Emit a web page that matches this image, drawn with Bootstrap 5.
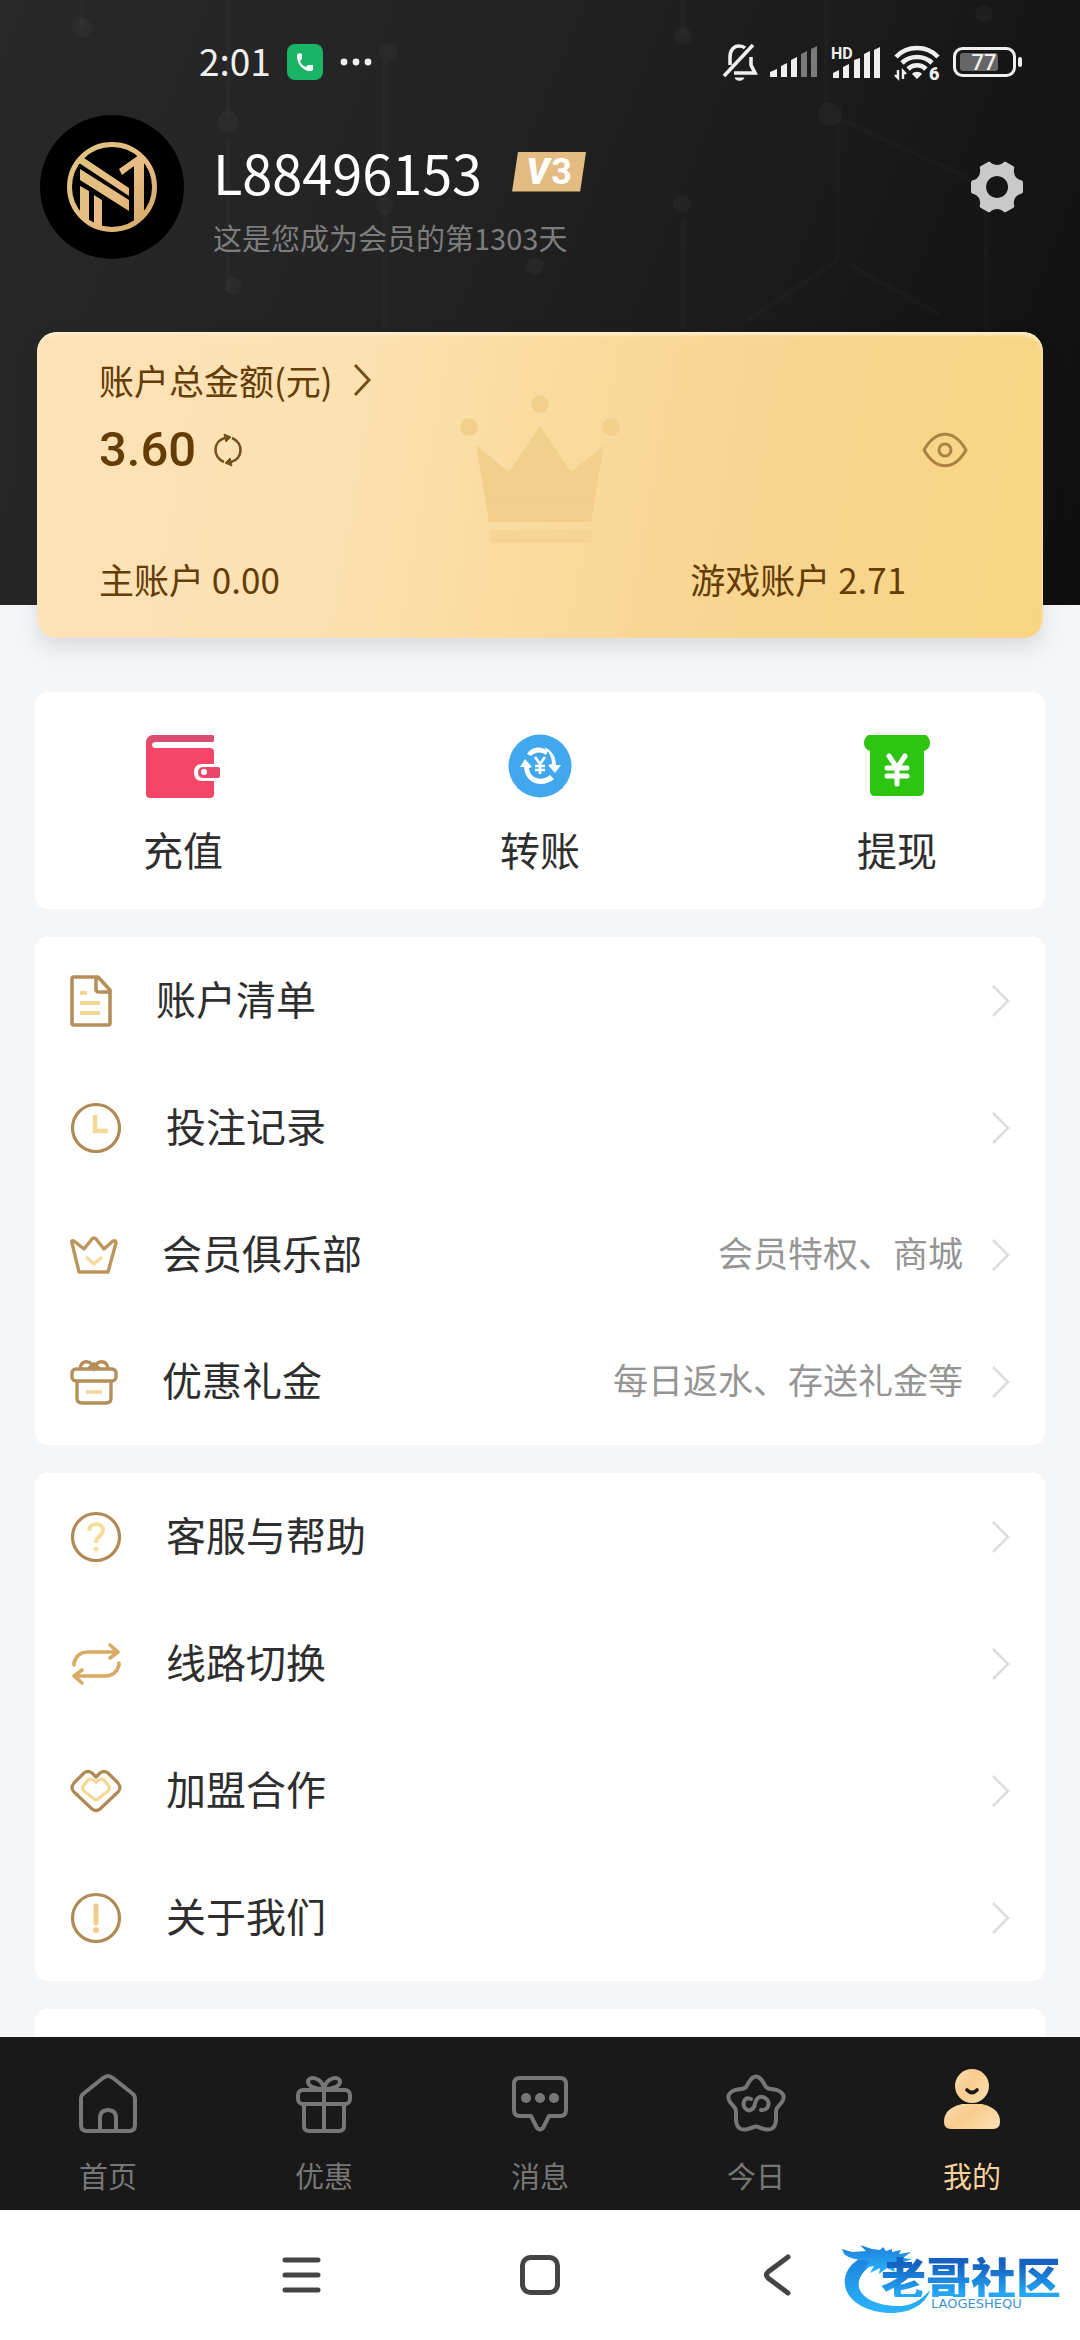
<!DOCTYPE html>
<html lang="zh-CN">
<head>
<meta charset="utf-8">
<meta name="viewport" content="width=device-width, initial-scale=1">
<title>我的</title>
<link href="https://cdn.jsdelivr.net/npm/bootstrap@5.3.0/dist/css/bootstrap.min.css" rel="stylesheet">
<style>
  body { font-family: "Noto Sans CJK SC", "Noto Sans", sans-serif; background: #f5f6f8; color: #2e2e2e; }
  a { color: inherit; text-decoration: none; }
  svg { display: block; flex: none; overflow: visible; }
  .plain-btn { background: none; border: 0; padding: 0; color: inherit; }

  .hero { background: linear-gradient(112deg, #282828 0%, #242424 32%, #1c1c1c 62%, #0e0e0e 100%); padding-bottom: 346px; }
  .hero-net { inset: 0; }
  .status { height: 115px; padding: 24px 58px 15px 199px; color: #efefef; }
  .clock { font-size: 37px; line-height: 44px; padding-bottom: 4px; }
  .status-icons { gap: 13px; }

  .profile { height: 144px; padding: 0 57px 0 40px; }
  .user-name { font-size: 54px; line-height: 60px; font-weight: 400; }
  .user-days { font-size: 29px; line-height: 44px; color: #7d7d7d; margin-top: 13px; }
  .who { margin-left: 29px; padding-top: 26px; }
  .level { width: 74px; height: 40px; margin-left: 30px; gap: 2px; color: #fff; background: #e4bb82; clip-path: polygon(8% 0, 100% 0, 92% 100%, 0 100%); line-height: 40px; font-family: Roboto, sans-serif; font-weight: 700; font-size: 36px; }
  .level em { font-weight: 900; }

  .wallet { margin: -273px 37px 0; padding: 24px 57px 35px 62px; border-radius: 20px; color: #643c05;
    background: linear-gradient(100deg, #fde2b8 0%, #fce1b2 30%, #fadca0 48%, #f8d590 70%, #f9d583 100%);
    box-shadow: 0 10px 20px rgba(40, 50, 80, .13), inset 0 3px 3px #feeecb; }
  .wallet-crown { left: 50%; top: 62px; transform: translateX(-50%); }
  .wallet-line { font-size: 35px; line-height: 48px; }
  .wallet-more { margin-left: 20px; }
  .total { font-family: Roboto, sans-serif; font-size: 49px; line-height: 60px; font-weight: 500; }
  .total-row { margin: 16px 0 75px; gap: 18px; }
  .eye-btn { margin-right: 18px; }

  .panel { margin: 28px 35px 0; background: #fff; border-radius: 12px; overflow: hidden; }
  .actions { margin-top: 54px; padding: 42px 108px 26px; height: 217px; }
  .action-text { font-size: 40px; line-height: 56px; }
  .action { gap: 23px; }

  .line-item { height: 127px; padding: 0 35px; gap: 44px; font-size: 40px; line-height: 56px; }
  .line-item .label, .hint-text { padding-bottom: 5px; }
  .hint { font-size: 35px; color: #959595; gap: 29px; }

  .tabbar { background: #191919; color: #777; height: 173px; font-size: 29px; line-height: 42px; }
  .tabbar a { padding-top: 32px; gap: 19px; }
  .tabbar .on { color: #fbd29a; }
  .sysbar { height: 130px; background: #fff; }
  .sysbar-keys { padding: 0 281px; }
  .forum { right: 16px; top: 33px; width: 224px; height: 72px; padding: 14px 0 0 41px; }
  .forum svg { left: 0; top: 0; }
  .forum-cn { font-weight: 900; font-size: 45px; line-height: 40px; background: linear-gradient(#1562c0 20%, #24a6f5 90%); -webkit-background-clip: text; background-clip: text; color: transparent; }
  .forum-en { font-family: "DejaVu Sans", sans-serif; font-size: 13px; line-height: 14px; padding-left: 50px; color: #3c94d8; }
</style>
<script src="https://cdn.jsdelivr.net/npm/bootstrap@5.3.0/dist/js/bootstrap.bundle.min.js"></script>
</head>
<body>
<div class="d-flex flex-column vh-100 overflow-hidden">
  <main class="flex-fill overflow-hidden">
    <header class="hero position-relative">
      <svg class="hero-net position-absolute w-100 h-100" viewBox="0 0 1080 605" preserveAspectRatio="none" fill="none" stroke="#fff" stroke-opacity=".018" stroke-width="5" aria-hidden="true">
        <path d="M82 0v30M228 0v115M228 140v150M385 60v140M385 210v120M683 0v35M683 220v110M838 120v140M986 210v120M826 0v105M838 118l130 60M838 260l-90 60M850 265l90 50"/>
        <g fill="#fff" fill-opacity=".03" stroke="none"><circle cx="82" cy="28" r="10"/><circle cx="228" cy="122" r="11"/><circle cx="385" cy="206" r="9"/><circle cx="388" cy="52" r="9"/><circle cx="683" cy="36" r="9"/><circle cx="682" cy="204" r="9"/><circle cx="830" cy="114" r="12"/><circle cx="984" cy="14" r="9"/><circle cx="233" cy="286" r="9"/><circle cx="535" cy="266" r="9"/></g>
      </svg>
      <div class="status position-relative d-flex align-items-center justify-content-between">
        <div class="d-flex align-items-center">
          <span class="clock">2:01</span>
          <svg class="ms-3 me-3" width="36" height="36" viewBox="0 0 36 36"><rect width="36" height="36" rx="8" fill="#18b566"/><path d="M10 11c1-2 3-2 5-1v5l-2 2c1 3 3 5 6 6l2-2h5v5c-1 1-3 1-4 1-7-1-12-7-12-16z" fill="#fff"/></svg>
          <svg width="34" height="10" viewBox="0 0 34 10" fill="#efefef"><circle cx="5" cy="5" r="3.4"/><circle cx="17" cy="5" r="3.4"/><circle cx="29" cy="5" r="3.4"/></svg>
        </div>
        <div class="status-icons d-flex align-items-center">
          <svg width="35" height="38" viewBox="0 0 35 38" fill="none" stroke="#efefef" stroke-width="3.6"><path d="M8 22V14C8 7 12 3 17 3c3 0 5 1 6 2M29 14v8l4 8H12M31 2L2 33"/><path d="M13 35h9c-1 3-8 3-9 0z" fill="#efefef" stroke-width="1"/></svg>
          <svg width="48" height="32" viewBox="0 0 48 32" fill="#efefef"><path d="M0 31v-5l7-3v8zM11 31V20l6-3v14zM21 31V14l6-3v20z"/><path d="M31 31V8l6-3v26zM41 31V3l6-3v31z" opacity=".45"/></svg>
          <svg width="50" height="34" viewBox="0 0 50 34" fill="#efefef"><path d="M2 33v-5l6-3v8zM12 33V22l6-3v14zM23 33V15l6-2v20zM33 33V9l6-3v27zM43 33V5l6-3v31z"/><text x="0" y="14" font-family="Roboto, sans-serif" font-weight="700" font-size="16">HD</text></svg>
          <svg width="46" height="38" viewBox="0 0 46 38" fill="none" stroke="#efefef" stroke-width="4.6"><path d="M2 14C13 2 33 2 44 14M8 20c8-8 22-8 30 0M14 26c5-5 13-5 18 0"/><path d="M18 31c2-3 8-3 10 0l-5 5z" fill="#efefef" stroke="none"/><path d="M4 27v8l-3-3M9 36v-8l3 3" stroke-width="2.4"/><text x="35" y="37" font-family="Roboto, sans-serif" font-weight="900" font-size="18" fill="#efefef" stroke="none">6</text></svg>
          <svg width="69" height="30" viewBox="0 0 69 30"><rect x="1.5" y="1.5" width="60" height="27" rx="8" fill="none" stroke="#efefef" stroke-width="3"/><rect x="7" y="6" width="38" height="18" rx="3" fill="#666"/><rect x="65" y="10" width="4" height="10" rx="2" fill="#efefef"/><text x="31" y="23" text-anchor="middle" font-family="Roboto, sans-serif" font-size="22" font-weight="500" fill="#efefef">77</text></svg>
        </div>
      </div>
      <div class="profile position-relative d-flex align-items-center">
        <svg width="144" height="144" viewBox="0 0 144 144">
          <defs><linearGradient id="gold" x1="0" y1="0" x2="1" y2="1"><stop offset="0" stop-color="#dfc57e"/><stop offset=".55" stop-color="#e8bc84"/><stop offset="1" stop-color="#d2a763"/></linearGradient><clipPath id="ring"><circle cx="72" cy="72" r="42"/></clipPath></defs>
          <circle cx="72" cy="72" r="72"/>
          <circle cx="72" cy="72" r="42.5" fill="none" stroke="url(#gold)" stroke-width="5"/>
          <g clip-path="url(#ring)" fill="url(#gold)"><path d="M38 39l51 34v8L36 46zM40 54l49 31v11L40 65zM40 71l9 5v42h-9zM54 80l8 5v34h-8zM79 54l20-14h5v66l-10 7V51l-12 9z"/></g>
        </svg>
        <div class="who flex-fill">
          <div class="d-flex align-items-center text-white">
            <h1 class="user-name mb-0">L88496153</h1>
            <span class="level d-flex align-items-center justify-content-center"><em>V</em><span>3</span></span>
          </div>
          <div class="user-days">这是您成为会员的第1303天</div>
        </div>
        <button class="plain-btn" type="button" aria-label="设置"><svg width="52" height="52" viewBox="0 0 52 52"><path fill="#c9c9c9" fill-rule="evenodd" d="M17 1q2-1 3 1 6 4 12 0 1-2 3-1l7 4q2 1 1 3-1 8 6 11 3 0 3 3v8q0 3-3 3-7 3-6 11 1 2-1 3l-7 4q-2 1-3-1-6-4-12 0-1 2-3 1l-7-4q-2-1-1-3 1-8-6-11-3 0-3-3v-8q0-3 3-3 7-3 6-11-1-2 1-3zM26 15a11 11 0 1 0 .1 0z"/></svg></button>
      </div>
    </header>

    <section class="wallet position-relative">
      <svg class="wallet-crown position-absolute" width="160" height="150" viewBox="0 0 160 150"><defs><linearGradient id="crown" x1="0" y1="0" x2="0" y2="1"><stop offset="0" stop-color="#efd28c"/><stop offset="1" stop-color="#f4cd8b"/></linearGradient></defs><g fill="url(#crown)"><circle cx="9" cy="33" r="9"/><circle cx="80" cy="10" r="9"/><circle cx="151" cy="33" r="9"/><path d="M16 51l33 27 31-46 31 46 33-27-13 77H29z"/><path d="M29 136h104l-2 13H30z" opacity=".55"/></g></svg>
      <a href="#" class="wallet-line position-relative d-inline-flex align-items-center">账户总金额(元)
        <svg class="wallet-more" width="18" height="32" viewBox="0 0 18 32" fill="none" stroke="#74501d" stroke-width="3"><path d="M2 1l14 15L2 31"/></svg></a>
      <div class="total-row position-relative d-flex align-items-center">
        <span class="total">3.60</span>
        <button class="plain-btn" type="button" aria-label="刷新"><svg width="28" height="32" viewBox="0 0 28 32" fill="none" stroke="#74501d" stroke-width="2.6"><path d="M10 28C-2 23-1 7 11 4M18 4c12 5 11 21-1 24"/><path d="M10 0l7 3-5 5zM18 32l-7-3 5-5z" fill="#74501d" stroke-width="1"/></svg></button>
        <button class="plain-btn eye-btn ms-auto" type="button" aria-label="显示金额"><svg width="46" height="36" viewBox="0 0 46 36" fill="none" stroke="#ac8142" stroke-width="3"><path d="M2 18C14-3 32-3 44 18 32 39 14 39 2 18z" stroke-linejoin="round"/><circle cx="23" cy="18" r="6"/></svg></button>
      </div>
      <div class="row g-0 wallet-line position-relative">
        <div class="col-8">主账户 0.00</div>
        <div class="col-4">游戏账户 2.71</div>
      </div>
    </section>

    <nav class="panel actions d-flex justify-content-between" aria-label="资金">
      <a href="#" class="action d-flex flex-column align-items-center">
        <svg width="74" height="64" viewBox="0 0 74 64"><path d="M8 1h58q2 0 2 2v3q0 2-2 2H10q-4 0-4 3t4 3h54q4 0 4 4v12H56q-8 0-8 8.500T56 47h12v13q0 4-4 4H4q-4 0-4-4V9q0-8 8-8z" fill="#f64668"/><path d="M8 1h58q2 0 2 2v3q0 2-2 2H10Q3 8 1 11 1 1 8 1z" fill="#d94d70"/><path d="M58 33h14q2 0 2 2v7q0 2-2 2H58q-6 0-6-5.500t6-5.500z" fill="#e5486b"/><circle cx="58" cy="38" r="3" fill="#fff"/></svg>
        <span class="action-text">充值</span></a>
      <a href="#" class="action d-flex flex-column align-items-center">
        <svg width="64" height="64" viewBox="0 0 64 64"><circle cx="32" cy="32" r="31.500" fill="#41a8ee"/><g fill="#fff"><path d="M19 20C24 12 34 12 40 17L38 21C33 17 27 18 23 22zM36 13C44 16 48 23 48 31L53 31 47 39 40 31 44 30C44 23 41 18 36 13z"/><path d="M12 33L17 25 24 33 21 34C22 45 34 48 42 41L46 45C35 55 17 50 16 33z"/></g><path d="M27 23l5 7 5-7M32 30v10M27 32h10M27 36h10" fill="none" stroke="#fff" stroke-width="2.600"/></svg>
        <span class="action-text">转账</span></a>
      <a href="#" class="action d-flex flex-column align-items-center">
        <svg width="66" height="64" viewBox="0 0 66 64"><path d="M4 1h58q4 3 4 8 0 6-6 8v40q0 5-5 5H11q-5 0-5-5V17Q0 15 0 9q0-5 4-8z" fill="#2ec512"/><path d="M25 22l8 12 8-12M33 34v16M23 34h20M23 42h20" fill="none" stroke="#fff" stroke-width="5" stroke-linecap="round"/></svg>
        <span class="action-text">提现</span></a>
    </nav>

    <nav class="panel" aria-label="账户">
      <a href="#" class="line-item d-flex align-items-center">
        <svg width="42" height="52" viewBox="0 0 42 52" fill="none" stroke="#b58f59" stroke-width="3.600" stroke-linejoin="round"><path d="M4 2h24l12 13v33q0 2-2 2H4q-2 0-2-2V4q0-2 2-2zM26 2v12q0 3 3 3h11"/><path d="M10 18h7M10 28h20M10 38h20" stroke="#f3d594" stroke-width="4"/></svg>
        <span class="label flex-fill">账户清单</span>
        <svg width="18" height="32" viewBox="0 0 18 32" fill="none" stroke="#ddd" stroke-width="2.500"><path d="M1 1l15 15L1 31"/></svg></a>
      <a href="#" class="line-item d-flex align-items-center">
        <svg width="52" height="52" viewBox="0 0 52 52" fill="none" stroke="#b08a55" stroke-width="3.200"><circle cx="26" cy="26" r="23.500"/><path d="M25 13v16h13" stroke="#f6d994" stroke-width="4.500"/></svg>
        <span class="label flex-fill">投注记录</span>
        <svg width="18" height="32" viewBox="0 0 18 32" fill="none" stroke="#ddd" stroke-width="2.500"><path d="M1 1l15 15L1 31"/></svg></a>
      <a href="#" class="line-item d-flex align-items-center">
        <svg width="48" height="38" viewBox="0 0 48 38" fill="none" stroke="#bc955a" stroke-width="3.400" stroke-linejoin="round"><path d="M9 36L2 7q-1-3 2-2l10 8 8-10q2-2 4 0l8 10 9-8q3-1 3 2l-8 29z"/><path d="M16 21l8 7 8-7" stroke="#f6dc9c"/></svg>
        <span class="label flex-fill">会员俱乐部</span>
        <span class="hint d-flex align-items-center"><span class="hint-text">会员特权、商城</span>
        <svg width="18" height="32" viewBox="0 0 18 32" fill="none" stroke="#ddd" stroke-width="2.500"><path d="M1 1l15 15L1 31"/></svg></span></a>
      <a href="#" class="line-item d-flex align-items-center">
        <svg width="48" height="46" viewBox="0 0 48 46" fill="none" stroke="#b58f59" stroke-width="3.400"><rect x="2" y="10" width="44" height="12" rx="4"/><path d="M7 22v17q0 5 5 5h24q5 0 5-5V22M10 10c1-9 10-10 14-1 4-9 13-8 14 1M18 10l6-5 6 5"/><path d="M16 33h16" stroke="#f3d594"/></svg>
        <span class="label flex-fill">优惠礼金</span>
        <span class="hint d-flex align-items-center"><span class="hint-text">每日返水、存送礼金等</span>
        <svg width="18" height="32" viewBox="0 0 18 32" fill="none" stroke="#ddd" stroke-width="2.500"><path d="M1 1l15 15L1 31"/></svg></span></a>
    </nav>

    <nav class="panel" aria-label="服务">
      <a href="#" class="line-item d-flex align-items-center">
        <svg width="52" height="52" viewBox="0 0 52 52" fill="none" stroke="#b08a55" stroke-width="3.200"><circle cx="26" cy="26" r="23.500"/><path d="M19 20c0-9 14-9 14-1 0 6-7 6-7 13" stroke="#f4dc9a" stroke-width="4"/><circle cx="26" cy="38" r="2.500" fill="#f4dc9a" stroke="none"/></svg>
        <span class="label flex-fill">客服与帮助</span>
        <svg width="18" height="32" viewBox="0 0 18 32" fill="none" stroke="#ddd" stroke-width="2.500"><path d="M1 1l15 15L1 31"/></svg></a>
      <a href="#" class="line-item d-flex align-items-center">
        <svg width="52" height="42" viewBox="0 0 52 42" fill="none" stroke="#d8aa66" stroke-width="3.600" stroke-linecap="round" stroke-linejoin="round"><path d="M4 22v-2q3-11 14-11h30M40 2l8 7-8 6M49 20v2q-3 11-14 11H4M12 40l-8-7 8-6"/></svg>
        <span class="label flex-fill">线路切换</span>
        <svg width="18" height="32" viewBox="0 0 18 32" fill="none" stroke="#ddd" stroke-width="2.500"><path d="M1 1l15 15L1 31"/></svg></a>
      <a href="#" class="line-item d-flex align-items-center">
        <svg width="52" height="44" viewBox="0 0 52 44" fill="none" stroke="#b08a55" stroke-width="3.200" stroke-linejoin="round"><path d="M26 8l-4-4q-4-3-8 0L4 14q-4 5 0 9l18 17q4 3 8 0l18-17q4-4 0-9L38 4q-4-3-8 0z"/><path d="M26 13l-3-2q-3-2-6 1l-3 4q-3 3 0 6l10 8q2 2 4 0l10-8q3-3 0-6l-3-4q-3-3-6-1z" stroke="#f3d896"/></svg>
        <span class="label flex-fill">加盟合作</span>
        <svg width="18" height="32" viewBox="0 0 18 32" fill="none" stroke="#ddd" stroke-width="2.500"><path d="M1 1l15 15L1 31"/></svg></a>
      <a href="#" class="line-item d-flex align-items-center">
        <svg width="52" height="52" viewBox="0 0 52 52" fill="none" stroke="#b08a55" stroke-width="3.200"><circle cx="26" cy="26" r="23.500"/><path d="M26 14v17" stroke="#f1cc88" stroke-width="5" stroke-linecap="round"/><circle cx="26" cy="38" r="3" fill="#f1cc88" stroke="none"/></svg>
        <span class="label flex-fill">关于我们</span>
        <svg width="18" height="32" viewBox="0 0 18 32" fill="none" stroke="#ddd" stroke-width="2.500"><path d="M1 1l15 15L1 31"/></svg></a>
    </nav>

    <div class="panel"><div class="line-item"></div></div>
  </main>

  <nav class="tabbar row g-0 text-center flex-shrink-0" aria-label="主导航">
    <a href="#" class="col d-flex flex-column align-items-center">
      <svg width="64" height="66" viewBox="0 0 64 66" fill="none" stroke="#777" stroke-width="4" stroke-linejoin="round"><path d="M27 9q5-4 10 0l20 16q2 2 2 4v27q0 6-6 6H11q-6 0-6-6V29q0-2 2-4zM24 62V49q0-8 8-8t8 8v13"/></svg>首页</a>
    <a href="#" class="col d-flex flex-column align-items-center">
      <svg width="64" height="66" viewBox="0 0 64 66" fill="none" stroke="#777" stroke-width="4" stroke-linejoin="round"><rect x="6" y="21" width="52" height="14" rx="5"/><path d="M12 35v22q0 5 5 5h30q5 0 5-5V35M32 21v41M32 20c-2-12-16-14-16-7 0 4 7 7 16 7 2-12 16-14 16-7 0 4-7 7-16 7z"/></svg>优惠</a>
    <a href="#" class="col d-flex flex-column align-items-center">
      <svg width="64" height="66" viewBox="0 0 64 66" fill="none" stroke="#777" stroke-width="4" stroke-linejoin="round"><path d="M12 9h40q6 0 6 6v26q0 6-6 6H41l-6 12q-3 3-6 0l-6-12H12q-6 0-6-6V15q0-6 6-6z"/><g fill="#777" stroke="none"><circle cx="18" cy="29" r="5"/><circle cx="32" cy="29" r="5"/><circle cx="46" cy="29" r="5"/></g></svg>消息</a>
    <a href="#" class="col d-flex flex-column align-items-center">
      <svg width="64" height="66" viewBox="0 0 64 66" fill="none" stroke="#777" stroke-width="4" stroke-linejoin="round"><path d="M25 13q7-11 14 0l3 5q2 2 5 2l6 1q10 4 5 12l-5 6q-1 2-1 4v8q-1 12-12 9l-6-2q-2-1-4 0l-6 2q-11 3-12-9v-8q0-2-1-4l-5-6q-5-8 5-12l6-1q3 0 5-2z"/><path d="M27 30c-7-3-9 5-6 9 4 5 9 1 10-4 1-6 5-9 10-6 6 3 4 13-4 12" stroke-linecap="round"/></svg>今日</a>
    <a href="#" class="col on d-flex flex-column align-items-center" aria-current="page">
      <svg width="64" height="66" viewBox="0 0 64 66"><defs><linearGradient id="me" x1="0" y1="0" x2="1" y2=".6"><stop offset="0" stop-color="#f8ddb4"/><stop offset=".5" stop-color="#f9cc8c"/><stop offset="1" stop-color="#fbdcac"/></linearGradient></defs><circle cx="32" cy="17" r="17" fill="url(#me)"/><path d="M22 35h20q18 4 18 18 0 7-7 7H11q-7 0-7-7 0-14 18-18z" fill="url(#me)"/><path d="M27 21q5 5 10 0" fill="none" stroke="#191919" stroke-width="3.600" stroke-linecap="round"/></svg>我的</a>
  </nav>

  <footer class="sysbar position-relative flex-shrink-0">
    <div class="sysbar-keys d-flex align-items-center justify-content-between h-100">
      <button class="plain-btn" type="button" aria-label="最近任务"><svg width="40" height="40" viewBox="0 0 40 40" stroke="#444" stroke-width="5" stroke-linecap="round"><path d="M4 5h33M4 20h33M4 35h33"/></svg></button>
      <button class="plain-btn" type="button" aria-label="主屏幕"><svg width="42" height="42" viewBox="0 0 42 42" fill="none" stroke="#444" stroke-width="5"><rect x="3.500" y="3.500" width="35" height="35" rx="8"/></svg></button>
      <button class="plain-btn" type="button" aria-label="返回"><svg width="40" height="42" viewBox="0 0 40 42" fill="none" stroke="#444" stroke-width="5" stroke-linecap="round"><path d="M29 3L9 18q-3 3 0 6l20 15"/></svg></button>
    </div>
    <div class="forum position-absolute">
      <svg class="position-absolute" width="90" height="72" viewBox="0 0 90 72"><defs><linearGradient id="dragon" x1="0" y1="0" x2="0" y2="1"><stop offset="0" stop-color="#1c7fdc"/><stop offset="1" stop-color="#2bb4fb"/></linearGradient></defs><g fill="url(#dragon)"><path d="M34 10C-8 20-6 66 48 70c22 1 38-9 42-23C80 59 68 64 54 63 14 60 6 34 40 17z"/><path d="M2 6l10 3 14-1-6-6 12 4 8 1 3-3 3 4 6-2v3l9-2-2 4 12-2-8 6 9 1-8 3 6 4-11-2-5 4 1 4-8-4-8 6 1-6-10 5 4-7-9 2 4-6-4-2q-14 0-21-6z"/></g></svg>
      <div class="forum-cn position-relative text-nowrap">老哥社区</div>
      <div class="forum-en position-relative">LAOGESHEQU</div>
    </div>
  </footer>
</div>
</body>
</html>
